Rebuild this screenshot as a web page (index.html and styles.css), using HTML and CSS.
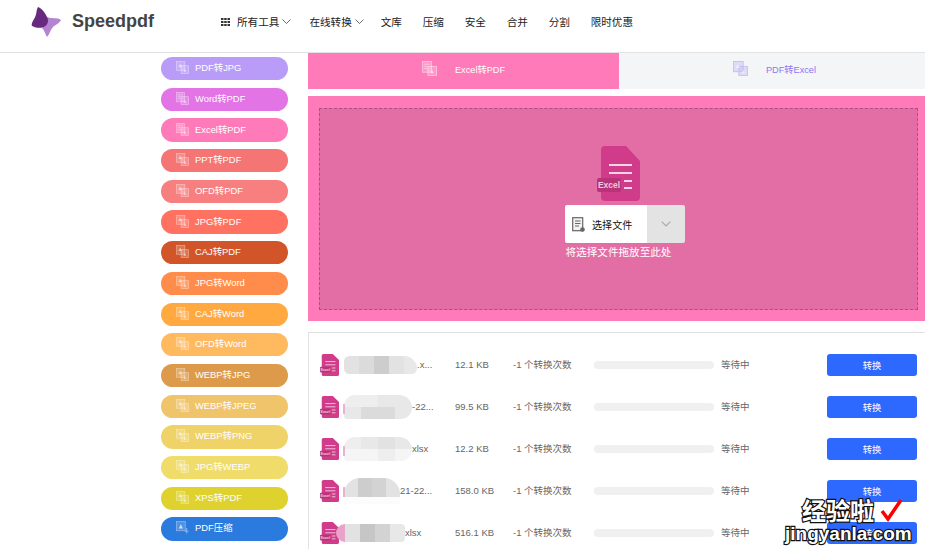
FILE: index.html
```html
<!DOCTYPE html>
<html lang="zh">
<head>
<meta charset="utf-8">
<title>Speedpdf</title>
<link rel="stylesheet" href="styles.css">
</head>
<body>
<svg class="defs" width="0" height="0" aria-hidden="true">
  <defs>
    <symbol id="conv" viewBox="0 0 14 14">
      <rect x="0.5" y="0.5" width="9" height="9.5" fill="currentColor" fill-opacity=".45" stroke="currentColor" stroke-width=".8"/>
      <rect x="5.5" y="5" width="8" height="8.5" fill="currentColor" fill-opacity=".45" stroke="currentColor" stroke-width=".8"/>
      <path d="M2.5 6.5 4.5 3 6.5 6.5Z" fill="#fff" fill-opacity=".55"/>
      <path d="M8 11.5 9.5 8.5 11 11.5Z" fill="#fff" fill-opacity=".55"/>
    </symbol>
    <symbol id="conv-doc" viewBox="0 0 14 14">
      <rect x="0.5" y="0.5" width="8.5" height="10" fill="currentColor" fill-opacity=".45" stroke="currentColor" stroke-width=".8"/>
      <rect x="5.5" y="5" width="8" height="8.5" fill="currentColor" fill-opacity=".45" stroke="currentColor" stroke-width=".8"/>
      <path d="M2 3H7.5M2 5H5M2 7H5" stroke="#fff" stroke-opacity=".55" stroke-width=".7"/>
      <path d="M8 11.5 9.5 8.5 11 11.5Z" fill="#fff" fill-opacity=".55"/>
    </symbol>
    <symbol id="press" viewBox="0 0 14 14">
      <rect x="0.5" y="0.5" width="9.5" height="10" fill="currentColor" fill-opacity=".45" stroke="currentColor" stroke-width=".8"/>
      <path d="M3 8 5.2 3.5 7.5 8Z" fill="#fff" fill-opacity=".7"/>
      <path d="M11.5 7.5V13.5M9.5 11H13.5" stroke="currentColor" stroke-width="1.2"/>
    </symbol>
    <symbol id="file" viewBox="0 0 43 55" preserveAspectRatio="none">
      <path d="M8 0H29L43 15V51a4 4 0 0 1-4 4H8a4 4 0 0 1-4-4V4a4 4 0 0 1 4-4Z" fill="#d13c8a"/>
      <path d="M12 19H35M12 27H35M27 35H35M27 42H35" stroke="#f8d6e8" stroke-width="2"/>
      <rect x="0" y="32" width="24" height="14" rx="2" fill="#b8337a"/>
      <text x="12" y="42" class="badge-text">Excel</text>
    </symbol>
  </defs>
</svg>

<header class="header">
  <a class="logo">
    <svg class="logo-mark" viewBox="0 0 30 30">
      <path d="M16 10C20 12 26 10 30 13 29 16 24 18 22 20 19 23 19 27 16 30 14 27 14 24 11 21 15 19 17 15 16 10Z" fill="#b284d2"/>
      <path d="M7 0C10 1 14 5 16 10 18 13 17 18 13 20 8 22 3 20 1 19 0 17 2 14 3 12 6 8 5 3 7 0Z" fill="#67297f"/>
    </svg>
    <span class="logo-text">Speedpdf</span>
  </a>
  <nav class="nav">
    <svg class="nav-grid" viewBox="0 0 9 8"><path d="M0 0h2.5v2H0zM3.2 0h2.5v2H3.2zM6.5 0H9v2H6.5zM0 3h2.5v2H0zM3.2 3h2.5v2H3.2zM6.5 3H9v2H6.5zM0 6h2.5v2H0zM3.2 6h2.5v2H3.2zM6.5 6H9v2H6.5z" fill="#333"/></svg>
    <span class="nav-item nav-first">所有工具<svg class="chev" viewBox="0 0 9 5"><path d="M.5.5 4.5 4.5 8.5.5" /></svg></span>
    <span class="nav-item nav-second">在线转换<svg class="chev" viewBox="0 0 9 5"><path d="M.5.5 4.5 4.5 8.5.5" /></svg></span>
    <span class="nav-item">文库</span>
    <span class="nav-item">压缩</span>
    <span class="nav-item">安全</span>
    <span class="nav-item">合并</span>
    <span class="nav-item">分割</span>
    <span class="nav-item">限时优惠</span>
  </nav>
</header>

<main class="main">
  <aside class="side">
    <a class="pill c1"><svg class="pill-ic"><use href="#conv"/></svg>PDF转JPG</a>
    <a class="pill c2"><svg class="pill-ic"><use href="#conv-doc"/></svg>Word转PDF</a>
    <a class="pill c3"><svg class="pill-ic"><use href="#conv-doc"/></svg>Excel转PDF</a>
    <a class="pill c4"><svg class="pill-ic"><use href="#conv"/></svg>PPT转PDF</a>
    <a class="pill c5"><svg class="pill-ic"><use href="#conv"/></svg>OFD转PDF</a>
    <a class="pill c6"><svg class="pill-ic"><use href="#conv"/></svg>JPG转PDF</a>
    <a class="pill c7"><svg class="pill-ic"><use href="#conv"/></svg>CAJ转PDF</a>
    <a class="pill c8"><svg class="pill-ic"><use href="#conv"/></svg>JPG转Word</a>
    <a class="pill c9"><svg class="pill-ic"><use href="#conv"/></svg>CAJ转Word</a>
    <a class="pill c10"><svg class="pill-ic"><use href="#conv"/></svg>OFD转Word</a>
    <a class="pill c11"><svg class="pill-ic"><use href="#conv"/></svg>WEBP转JPG</a>
    <a class="pill c12"><svg class="pill-ic"><use href="#conv"/></svg>WEBP转JPEG</a>
    <a class="pill c13"><svg class="pill-ic"><use href="#conv"/></svg>WEBP转PNG</a>
    <a class="pill c14"><svg class="pill-ic"><use href="#conv"/></svg>JPG转WEBP</a>
    <a class="pill c15"><svg class="pill-ic"><use href="#conv"/></svg>XPS转PDF</a>
    <a class="pill c16"><svg class="pill-ic"><use href="#press"/></svg>PDF压缩</a>
  </aside>

  <section class="content">
    <div class="tabs">
      <div class="tab tab-on"><svg class="tab-ic"><use href="#conv-doc"/></svg>Excel转PDF</div>
      <div class="tab tab-off"><svg class="tab-ic"><use href="#conv"/></svg>PDF转Excel</div>
    </div>

    <div class="drop">
      <div class="drop-inner">
        <svg class="hero-file"><use href="#file"/></svg>
        <div class="pick">
          <div class="pick-main">
            <svg class="pick-ic" viewBox="0 0 13 15">
              <rect x=".7" y=".7" width="10" height="13" fill="#f2f2f2" stroke="#666" stroke-width="1.2"/>
              <path d="M3 4H8.5M3 6.5H8.5M3 9H7" stroke="#666"/>
              <circle cx="10.5" cy="12.5" r="2.3" fill="#666"/>
            </svg>
            选择文件
          </div>
          <div class="pick-more"><svg class="pick-chev" viewBox="0 0 10 6"><path d="M.7.7 5 5 9.3.7"/></svg></div>
        </div>
        <p class="drop-hint">将选择文件拖放至此处</p>
      </div>
    </div>

    <div class="list">
      <div class="row">
        <svg class="row-file"><use href="#file"/></svg>
        <div class="name"><span class="mosaic m1"><i class="g2"></i><i class="g3"></i><i class="g5"></i><i class="g2"></i><i class="g1"></i></span>.x...</div>
        <div>12.1 KB</div><div>-1 个转换次数</div><div class="bar"></div><div class="status">等待中</div><button class="go">转换</button>
      </div>
      <div class="row">
        <svg class="row-file"><use href="#file"/></svg>
        <div class="name tick"><span class="mosaic m2"><i class="g0"></i><i class="g0"></i><i class="g1"></i><i class="g1"></i><i class="g1"></i><i class="g3"></i><i class="g3"></i><i class="g1"></i></span>-22...</div>
        <div>99.5 KB</div><div>-1 个转换次数</div><div class="bar"></div><div class="status">等待中</div><button class="go">转换</button>
      </div>
      <div class="row">
        <svg class="row-file"><use href="#file"/></svg>
        <div class="name tick"><span class="mosaic m2"><i class="g0"></i><i class="g1"></i><i class="g2"></i><i class="g1"></i><i class="g00"></i><i class="g00"></i><i class="g0"></i><i class="g00"></i></span>xlsx</div>
        <div>12.2 KB</div><div>-1 个转换次数</div><div class="bar"></div><div class="status">等待中</div><button class="go">转换</button>
      </div>
      <div class="row">
        <svg class="row-file"><use href="#file"/></svg>
        <div class="name tick"><span class="mosaic m4"><i class="g2"></i><i class="g5"></i><i class="g4"></i><i class="g2"></i><i class="g000"></i><i class="g000"></i><i class="g000"></i><i class="g000"></i></span>21-22...</div>
        <div>158.0 KB</div><div>-1 个转换次数</div><div class="bar"></div><div class="status">等待中</div><button class="go">转换</button>
      </div>
      <div class="row">
        <svg class="row-file"><use href="#file"/></svg>
        <div class="name"><span class="mosaic m5"><i class="gp"></i><i class="g2"></i><i class="g6"></i><i class="g4"></i><i class="g1"></i></span>xlsx</div>
        <div>516.1 KB</div><div>-1 个转换次数</div><div class="bar"></div><div class="status">等待中</div><button class="go">转换</button>
      </div>
    </div>
  </section>
</main>

<div class="mark">
  <div class="mark-top">
    <span class="mark-cn">经验啦</span>
    <svg class="mark-tick" viewBox="0 0 24 25"><path d="M2 14 8 22 21 3" /></svg>
  </div>
  <div class="mark-en">jingyanla.com</div>
</div>
</body>
</html>
```
FILE: styles.css
```css
* { box-sizing: border-box; }
html, body { margin: 0; height: 549px; overflow: hidden; background: #fff; }
body {
  font-family: "Liberation Sans", "Noto Sans CJK SC", sans-serif;
  font-size: 9.5px;
  color: #666;
}
.defs { position: absolute; }
.badge-text { font: bold 8.5px "Liberation Sans", sans-serif; fill: #f3c6de; text-anchor: middle; }

.header {
  height: 53px;
  border-bottom: 1px solid #e2e2e2;
  display: flex;
  align-items: flex-start;
  padding-left: 31px;
}
.logo { display: flex; align-items: flex-start; width: 190px; padding-top: 7px; }
.logo-mark { width: 30px; height: 30px; flex: none; }
.logo-text { margin: 3px 0 0 11px; font-size: 18px; font-weight: bold; color: #444; line-height: 22px; }
.nav { display: flex; align-items: center; height: 43px; font-size: 10.6px; color: #222; }
.nav-grid { width: 9px; height: 8px; margin-right: 7px; flex: none; }
.nav-item { display: flex; align-items: center; margin-right: 20.8px; white-space: nowrap; }
.nav-first { margin-right: 18px; }
.nav-second { margin-right: 17px; }
.chev { width: 9px; height: 5px; margin-left: 3px; fill: none; stroke: #444; stroke-width: .8; }

.main { display: flex; padding-left: 161px; }
.side { width: 127px; flex: none; padding-top: 4px; display: flex; flex-direction: column; gap: 7.4px; }
.pill {
  height: 23.3px;
  border-radius: 12px;
  display: flex;
  align-items: center;
  padding: 0 0 3px 15px;
  color: #fff;
  font-size: 9.4px;
  white-space: nowrap;
}
.pill-ic { width: 13px; height: 13px; margin: 1px 6px 0 0; flex: none; color: rgba(255,255,255,.42); }
.c1 { background: #b89cf8; }
.c2 { background: #e374e6; }
.c3 { background: #ff7ab8; }
.c4 { background: #f57474; }
.c5 { background: #f87f7f; }
.c6 { background: #ff7161; }
.c7 { background: #d2552a; }
.c8 { background: #ff8c4a; }
.c9 { background: #ffa940; }
.c10 { background: #ffba5f; }
.c11 { background: #dd9a4a; }
.c12 { background: #f0c46a; }
.c13 { background: #efd268; }
.c14 { background: #efdc6b; }
.c15 { background: #e0d22e; }
.c16 { background: #2b7ade; }

.content { width: 617px; margin-left: 20px; flex: none; }
.tabs { display: flex; height: 36px; }
.tab { display: flex; align-items: center; justify-content: center; font-size: 9.2px; padding-bottom: 5px; }
.tab-on { width: 311px; background: #ff7ab8; color: #fff; }
.tab-off { flex: 1; background: #f4f5f7; color: #8b78f0; padding-left: 5px; }
.tab-ic { width: 15px; height: 15px; margin-right: 18px; color: rgba(255,255,255,.5); }
.tab-off .tab-ic { color: #c5bcf5; }

.drop { margin-top: 7px; height: 225px; background: #ff7ab8; padding: 12px 7px 11px 11px; }
.drop-inner {
  height: 202px;
  background: #e36ea5;
  border: 1px dashed #b24d80;
  display: flex;
  flex-direction: column;
  align-items: center;
  padding-top: 37px;
}
.hero-file { width: 43px; height: 55px; }
.pick { display: flex; width: 120px; height: 38px; margin: 4px 0 0 13px; border-radius: 2px; overflow: hidden; }
.pick-main { width: 82px; background: #fff; display: flex; align-items: center; padding-left: 7px; color: #111; font-size: 10.1px; }
.pick-ic { width: 13px; height: 15px; margin-right: 7px; }
.pick-more { flex: 1; background: #e3e3e3; display: flex; align-items: center; justify-content: center; }
.pick-chev { width: 10px; height: 6px; fill: none; stroke: #aaa; stroke-width: 1.2; }
.drop-hint { margin: 2px 0 0; color: #fff; font-size: 10.6px; line-height: 14px; }

.list { margin-top: 11px; border: 1px solid #e2e2e2; border-right: 0; padding: 11px 8px 0 11px; height: 230px; }
.row {
  height: 42px;
  display: grid;
  grid-template-columns: 24px 111px 58px 81px 120px 113px 90px;
  align-items: center;
  white-space: nowrap;
}
.row > div:not(.bar) { padding-bottom: 2px; }
.row-file { width: 19px; height: 22px; }
.name { display: flex; align-items: center; position: relative; }
.tick::before {
  content: "";
  position: absolute;
  left: -1px;
  top: 11px;
  width: 2px;
  height: 10px;
  background: #e9b2d0;
}
.mosaic { display: grid; flex: none; overflow: hidden; margin-top: 2px; }
.mosaic i { display: block; }
.m1 { width: 73px; height: 18px; grid-template-columns: repeat(5, 15px); border-radius: 6px 14px 6px 6px; }
.m2 { width: 68px; height: 24px; grid-template-columns: repeat(4, 17px); border-radius: 14px 16px 14px 3px; }
.m4 { width: 56px; height: 26px; grid-template-columns: repeat(4, 14px); grid-template-rows: 19px 7px; border-radius: 16px 16px 2px 2px; }
.m5 { width: 69px; height: 18px; margin-left: -8px; grid-template-columns: 9px repeat(4, 15px); border-radius: 9px 4px 4px 9px; }
.g000 { background: #fcfcfc; }
.g00 { background: #f5f5f5; }
.g0 { background: #eeeeee; }
.g1 { background: #e8e8e8; }
.g2 { background: #e2e2e2; }
.g3 { background: #dbdbdb; }
.g4 { background: #d3d3d3; }
.g5 { background: #cdcdcd; }
.g6 { background: #c6c6c6; }
.gp { background: #e7a3c8; }
.bar { height: 8px; border-radius: 4px; background: #f0f0f0; }
.status { padding-left: 7px; }
.go {
  height: 22px;
  border: 0;
  border-radius: 3px;
  background: #2d69ff;
  color: #fff;
  font: 9.3px "Liberation Sans", "Noto Sans CJK SC", sans-serif;
  padding: 0 0 1px;
}

.mark { position: absolute; left: 785px; top: 496px; width: 130px; }
.mark-top { display: flex; align-items: center; height: 27px; padding-left: 17px; }
.mark-cn {
  font: bold 24px/27px "Noto Sans CJK SC", sans-serif;
  color: #fff;
  -webkit-text-stroke: 2.4px #111;
  paint-order: stroke fill;
}
.mark-tick { width: 24px; height: 25px; margin-left: 6px; fill: none; stroke: #f00; stroke-width: 3.5; }
.mark-en {
  font: bold 19px/22px "Liberation Sans", sans-serif;
  color: #fff;
  -webkit-text-stroke: 2.4px #111;
  paint-order: stroke fill;
  white-space: nowrap;
}
```
